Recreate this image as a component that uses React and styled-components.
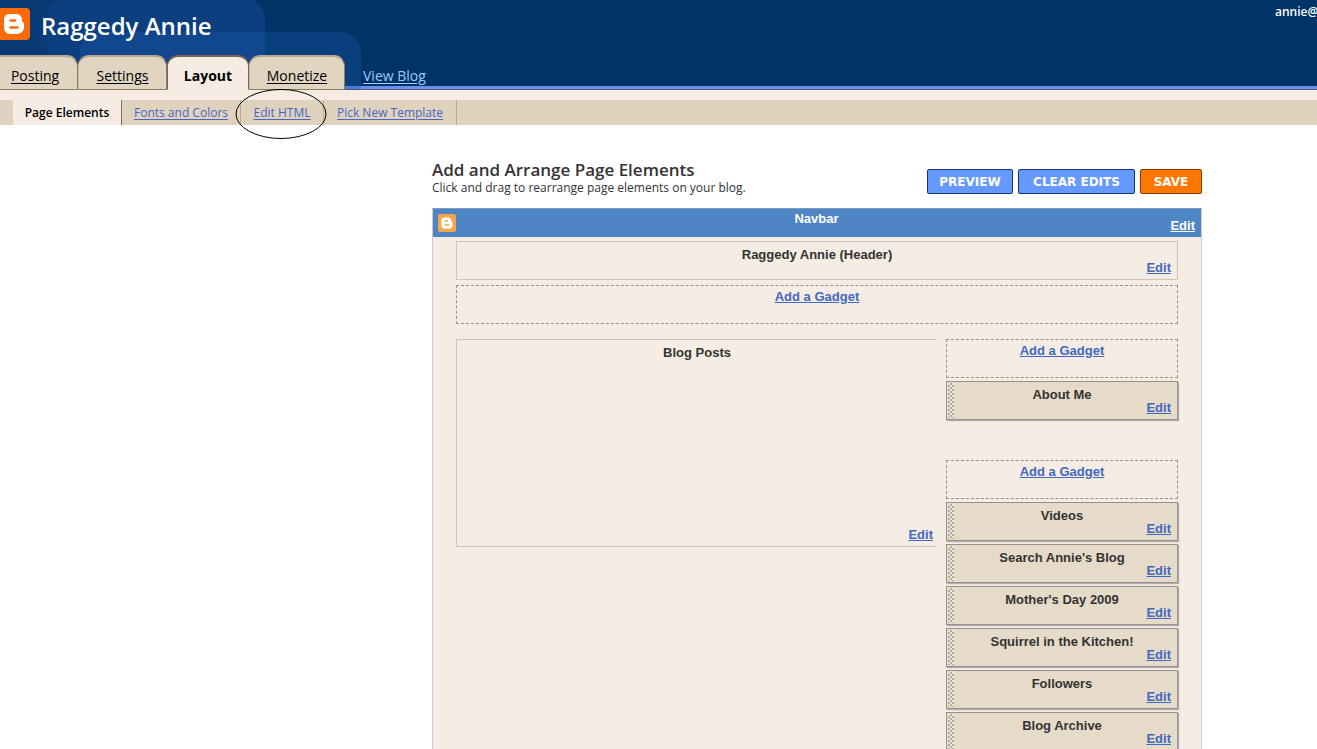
import styled, { createGlobalStyle, css } from "styled-components";

const tabs = [
  { label: "Posting", width: 78 },
  { label: "Settings", width: 89 },
  { label: "Layout", width: 82, active: true },
  { label: "Monetize", width: 96 },
];

const subTabs = [
  { label: "Fonts and Colors", width: 119 },
  { label: "Edit HTML", width: 83, circled: true },
  { label: "Pick New Template", width: 133 },
];

const gadgets = [
  "Videos",
  "Search Annie's Blog",
  "Mother's Day 2009",
  "Squirrel in the Kitchen!",
  "Followers",
  "Blog Archive",
];

const BloggerLogo = ({ size, color }) => (
  <svg width={size} height={size} viewBox="0 0 32 32" aria-hidden="true">
    <rect width="32" height="32" rx="4" fill={color} />
    <path
      fill="#fff"
      d="M12 6h6c4 0 6 3 6 6 0 2 0 2 1 2s1 1 1 3v2c0 4-3 7-7 7h-7c-4 0-6-3-6-7v-7c0-4 2-6 6-6z"
    />
    <path
      d="M12.500 12.500h4.500M12.500 19.500h7"
      stroke={color}
      strokeWidth="2.4"
      strokeLinecap="round"
    />
  </svg>
);

const Gadget = ({ title }) => (
  <GadgetBox>
    <Grip />
    <BoxTitle>{title}</BoxTitle>
    <EditLink href="#">Edit</EditLink>
  </GadgetBox>
);

const App = () => {
  return (
    <Page>
      <GlobalStyle />
      <Header>
        <Backdrop viewBox="0 0 362 90" aria-hidden="true">
          <rect x="-30" y="-4" width="295" height="150" rx="24" fill="#083a75" />
          <rect x="47" y="-4" width="218" height="150" rx="24" fill="#0c3f80" />
          <rect x="80" y="32" width="281" height="100" rx="20" fill="#1a55a5" opacity="0.35" />
        </Backdrop>
        <TitleRow>
          <LogoSlot>
            <BloggerLogo size={32} color="#ff6a08" />
          </LogoSlot>
          <BlogTitle>Raggedy Annie</BlogTitle>
          <Account>annie@</Account>
        </TitleRow>
        <Tabs>
          {tabs.map((tab) => (
            <Tab key={tab.label} href="#" $width={tab.width} $active={tab.active}>
              {tab.label}
            </Tab>
          ))}
          <ViewBlog href="#">View Blog</ViewBlog>
        </Tabs>
      </Header>
      <SubNav>
        <SubCurrent>Page Elements</SubCurrent>
        {subTabs.map((tab) => (
          <SubItem key={tab.label} $width={tab.width}>
            <a href="#">{tab.label}</a>
            {tab.circled && (
              <Circle viewBox="0 0 92 50" aria-hidden="true">
                <ellipse cx="46" cy="25" rx="45" ry="24.500" fill="none" stroke="#000" />
              </Circle>
            )}
          </SubItem>
        ))}
      </SubNav>
      <Main>
        <Intro>
          <div>
            <h2>Add and Arrange Page Elements</h2>
            <p>Click and drag to rearrange page elements on your blog.</p>
          </div>
          <Actions>
            <Button $width={86}>PREVIEW</Button>
            <Button $width={117}>CLEAR EDITS</Button>
            <Button $width={62} $primary>
              SAVE
            </Button>
          </Actions>
        </Intro>
        <Board>
          <Navbar>
            <BloggerLogo size={18} color="#f7a64a" />
            <span>Navbar</span>
            <a href="#">Edit</a>
          </Navbar>
          <BoardBody>
            <Section>
              <BoxTitle>Raggedy Annie (Header)</BoxTitle>
              <EditLink href="#">Edit</EditLink>
            </Section>
            <AddBox $top={5}>
              <a href="#">Add a Gadget</a>
            </AddBox>
            <Columns>
              <Posts>
                <BoxTitle>Blog Posts</BoxTitle>
                <EditLink href="#">Edit</EditLink>
              </Posts>
              <Sidebar>
                <AddBox>
                  <a href="#">Add a Gadget</a>
                </AddBox>
                <Gadget title="About Me" />
                <AddBox $top={40}>
                  <a href="#">Add a Gadget</a>
                </AddBox>
                {gadgets.map((title) => (
                  <Gadget key={title} title={title} />
                ))}
              </Sidebar>
            </Columns>
          </BoardBody>
        </Board>
      </Main>
    </Page>
  );
};

export default App;

const GlobalStyle = createGlobalStyle`
  * {
    box-sizing: border-box;
  }
  body {
    margin: 0;
    background: #fff;
    color: #333;
    font-family: "Open Sans", "Noto Sans", sans-serif;
  }
  h1, h2, p {
    margin: 0;
  }
`;

const Page = styled.div`
  height: 100vh;
  overflow: hidden;
`;

const Header = styled.header`
  position: relative;
  height: 90px;
  background: #003366;
  border-bottom: 1px solid #5a5a78;
  box-shadow: inset 0 -3px #6a8ff0;
`;

const Backdrop = styled.svg`
  position: absolute;
  left: 0;
  top: 0;
  width: 362px;
  height: 90px;
`;

const TitleRow = styled.div`
  position: relative;
  display: flex;
  height: 55px;
`;

const LogoSlot = styled.div`
  display: flex;
  justify-content: flex-end;
  width: 30px;
  padding-top: 8px;
  margin-right: 11px;
  overflow: hidden;
  svg {
    flex: none;
  }
`;

const BlogTitle = styled.h1`
  color: #fff;
  font-size: 24px;
  font-weight: 600;
  line-height: 52px;
`;

const Account = styled.span`
  width: 42px;
  margin-left: auto;
  overflow: hidden;
  color: #fff;
  font-size: 12px;
  font-weight: 600;
  line-height: 24px;
`;

const Tabs = styled.nav`
  position: relative;
  display: flex;
  height: 35px;
`;

const Tab = styled.a`
  width: ${({ $width }) => $width}px;
  border: 1px solid #8f7b66;
  border-top: 2px solid #b8a68f;
  border-left-color: #c9bba4;
  border-radius: 11px 11px 0 0;
  background: #e1d4c0;
  color: #000;
  font-size: 14px;
  line-height: 38px;
  text-align: center;
  text-underline-offset: 2px;
  &:first-child {
    padding-right: 7px;
    border-left: 0;
    border-top-left-radius: 0;
  }
  ${({ $active }) =>
    $active &&
    css`
      border-color: #7d6256;
      border-bottom-color: #f5ece3;
      background: #f5ece3;
      font-weight: 700;
      text-decoration: none;
    `}
`;

const ViewBlog = styled.a`
  margin-left: 18px;
  color: #99ccff;
  font-size: 14px;
  line-height: 42px;
  text-underline-offset: 2px;
`;

const SubNav = styled.nav`
  display: flex;
  height: 35px;
  padding-left: 13px;
  border-top: 10px solid #f5ece3;
  background: #e0d3be;
  font-size: 12px;
  line-height: 25px;
  text-align: center;
`;

const SubCurrent = styled.span`
  width: 109px;
  border-right: 1px solid #7d6c5d;
  background: #f5ece3;
  color: #000;
  font-weight: 600;
`;

const SubItem = styled.span`
  position: relative;
  width: ${({ $width }) => $width}px;
  border-right: 1px solid #b9aa95;
  a {
    color: #4766c4;
    text-underline-offset: 2px;
  }
`;

const Circle = styled.svg`
  position: absolute;
  left: -6px;
  top: -11px;
  width: 92px;
  height: 50px;
  pointer-events: none;
`;

const Main = styled.main`
  max-width: 770px;
  margin: 35px 115px 0 auto;
`;

const Intro = styled.div`
  display: flex;
  justify-content: space-between;
  height: 48px;
  h2 {
    font-size: 17px;
    font-weight: 600;
    line-height: 20px;
  }
  p {
    font-size: 12px;
    line-height: 16px;
  }
`;

const Actions = styled.div`
  display: flex;
  gap: 5px;
  padding-top: 9px;
`;

const Button = styled.button`
  width: ${({ $width }) => $width}px;
  height: 25px;
  padding: 0;
  border: 1px solid ${({ $primary }) => ($primary ? "#8a3c00" : "#113377")};
  border-radius: 2px;
  background: ${({ $primary }) => ($primary ? "#ff7700" : "#6699ff")};
  color: #fff;
  font-family: "DejaVu Sans", sans-serif;
  font-size: 12px;
  font-weight: 700;
  cursor: pointer;
`;

const Board = styled.section`
  border: 1px solid #c9ccd4;
  border-top-color: #7f9cc4;
  background: #f5ece3;
  font-family: "Liberation Sans", Arial, sans-serif;
  font-size: 13px;
  font-weight: 700;
`;

const Navbar = styled.div`
  display: grid;
  grid-template-columns: 30px 1fr 30px;
  height: 28px;
  padding: 0 6px 0 5px;
  background: #5085c5;
  color: #fff;
  text-align: center;
  line-height: 20px;
  svg {
    margin-top: 5px;
  }
  a {
    color: #fff;
    line-height: 34px;
    text-align: right;
  }
`;

const BoardBody = styled.div`
  padding: 4px 23px 24px;
`;

const box = css`
  position: relative;
  display: flex;
  flex-direction: column;
  justify-content: space-between;
  height: 39px;
  text-align: center;
`;

const Section = styled.div`
  ${box}
  border: 1px solid #cfc5bb;
`;

const BoxTitle = styled.span`
  line-height: 26px;
  margin-bottom: -13px;
`;

const EditLink = styled.a`
  align-self: flex-end;
  margin-right: 6px;
  color: #4169c0;
  line-height: 22px;
`;

const AddBox = styled.div`
  height: 39px;
  margin-top: ${({ $top }) => $top || 0}px;
  border: 1px dashed #9b9088;
  line-height: 22px;
  text-align: center;
  a {
    color: #4169c0;
  }
`;

const Columns = styled.div`
  display: flex;
  align-items: flex-start;
  gap: 9px;
  margin-top: 15px;
`;

const Posts = styled.div`
  ${box}
  flex: 1;
  height: 208px;
  border: 1px solid #cfc5bb;
  border-right: 0;
  ${EditLink} {
    margin-right: 4px;
  }
`;

const Sidebar = styled.div`
  width: 232px;
`;

const GadgetBox = styled.div`
  ${box}
  margin-top: 3px;
  border: 1px solid #96908f;
  background: #e6dbc9;
  box-shadow: 1px 1px 1px #b5acb0;
`;

const Grip = styled.i`
  position: absolute;
  left: 1px;
  top: 1px;
  bottom: 1px;
  width: 6px;
  background-color: #eee6d9;
  background-image: conic-gradient(#b3a99d 25%, transparent 0 50%, #b3a99d 0 75%, transparent 0);
  background-size: 4px 4px;
`;
